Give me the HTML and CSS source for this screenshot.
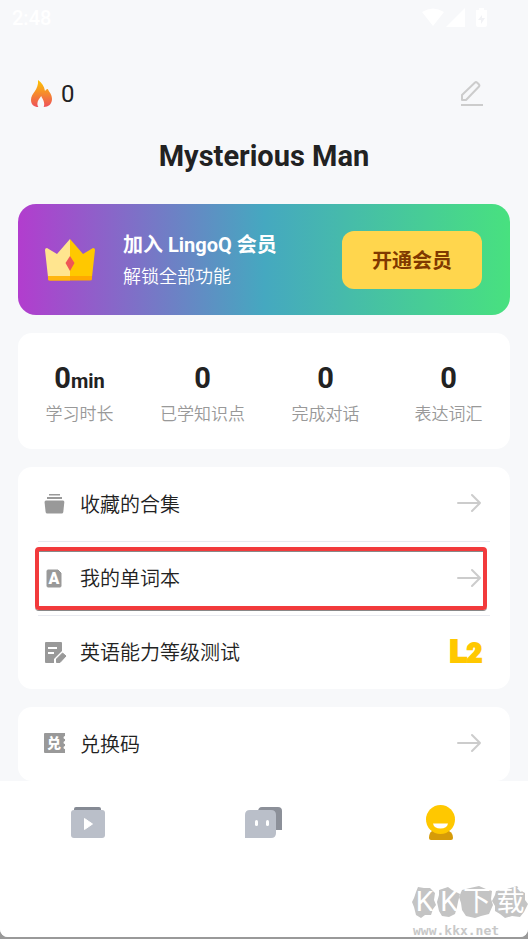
FILE: index.html
```html
<!DOCTYPE html>
<html lang="zh-CN">
<head>
<meta charset="utf-8">
<meta name="viewport" content="width=device-width, initial-scale=1">
<title>LingoQ</title>
<link rel="stylesheet" href="styles.css">
</head>
<body>
<div class="app">
  <div class="status">
    <span class="clock">2:48</span>
    <svg class="status-icons" width="66" height="20" viewBox="0 0 66 20" fill="#fff" aria-hidden="true">
      <path d="M0 4Q11-3 22 4L11 18z"/>
      <path d="M24 19 43 0v19z"/>
      <path d="M57 0h5v2h3v15q0 2-2 2h-7q-2 0-2-2V2h3z"/>
      <path d="m60 7-4 5h3v4l4-6h-3z" fill="#f1f2f5"/>
    </svg>
  </div>

  <header class="top">
    <div class="streak">
      <svg width="22" height="28" viewBox="0 0 22 28" aria-hidden="true">
        <defs><linearGradient id="fire" x1="0" y1="0" x2="0" y2="1"><stop offset="0" stop-color="#fdc500"/><stop offset="1" stop-color="#ee505a"/></linearGradient></defs>
        <path fill="url(#fire)" d="M7 0c4 3 6 6 7 11 1-1.500 2-2.200 2.800-2C18 12 21 14 21 19c0 5-3.500 8-8.300 8 .6-1.500.7-3 .2-5-.6-2.500-2-4-2.700-6-1.500 2.500-3.800 4.500-3.800 7.500 0 1.500.3 2.500 1 3.500C3 27 0 24.500 0 20 0 13 8 10 7 0z"/>
      </svg>
      <span>0</span>
    </div>
    <button class="edit" type="button" aria-label="编辑">
      <svg width="24" height="26" viewBox="0 0 24 26" fill="none" stroke="#ccc" stroke-width="2" aria-hidden="true">
        <path d="M2 19v-5L15 1.500q1-.8 2 0l2 2q.8 1 0 2L6 19z" stroke-linejoin="round"/><path d="M1 24h22"/>
      </svg>
    </button>
  </header>
  <h1 class="name">Mysterious Man</h1>

  <main class="cards">
    <section class="vip">
      <svg class="crown" width="50" height="42" viewBox="0 0 50 42" aria-hidden="true">
        <path d="M25 0 12 15 2 9Q0 9 0 11l3 27h22z" fill="#ffe58f"/>
        <path d="m25 0 13 15 10-6q2 0 2 2l-3 27H25z" fill="#ffc800"/>
        <path d="M3 37h44v3q0 1.500-2 1.500H5Q3 41.500 3 40z" fill="#ffa800"/>
        <path d="M3 37h22v4.500H5Q3 41.500 3 40z" fill="#ffb60f"/>
        <path d="m25 17 4.500 7-4.500 8-4.500-8z" fill="#ef5656"/>
      </svg>
      <div class="vip-text">
        <h2>加入 LingoQ 会员</h2>
        <p>解锁全部功能</p>
      </div>
      <button class="vip-button" type="button">开通会员</button>
    </section>

    <section class="card stats">
      <div class="stat"><strong>0<small>min</small></strong><span>学习时长</span></div>
      <div class="stat"><strong>0</strong><span>已学知识点</span></div>
      <div class="stat"><strong>0</strong><span>完成对话</span></div>
      <div class="stat"><strong>0</strong><span>表达词汇</span></div>
    </section>

    <nav class="card menu">
      <a class="row" href="#collections">
        <svg class="row-icon" width="24" height="24" viewBox="0 0 24 24" fill="#999" aria-hidden="true">
          <path d="M6 3h11v1.500H6zM4 6h15v2H4z"/><path d="M3 9.500h17q1.500 0 1.300 2l-1 9.500q-.2 1.500-1.700 1.500H4.300q-1.500 0-1.700-1.500l-1-9.500Q1.400 9.500 3 9.500z"/>
        </svg>
        <span>收藏的合集</span>
        <svg class="arrow" width="25" height="20" viewBox="0 0 25 20" aria-hidden="true"><path d="M1 10h22M15 2l8 8-8 8"/></svg>
      </a>
      <a class="row marked" href="#words">
        <svg class="row-icon" width="24" height="24" viewBox="0 0 24 24" aria-hidden="true">
          <path d="M5 4h10l3 3v13q0 1-1 1H5q-1 0-1-1V5q0-1 1-1z" fill="#999" stroke="#999" stroke-linejoin="round"/>
          <text x="11" y="18" class="icon-letter latin">A</text>
        </svg>
        <span>我的单词本</span>
        <svg class="arrow" width="25" height="20" viewBox="0 0 25 20" aria-hidden="true"><path d="M1 10h22M15 2l8 8-8 8"/></svg>
      </a>
      <a class="row" href="#level">
        <svg class="row-icon" width="24" height="24" viewBox="0 0 24 24" aria-hidden="true">
          <path d="M3 2h15q1 0 1 1v8l-8 8v4H3q-1 0-1-1V3q0-1 1-1z" fill="#999"/>
          <path d="M5 8h9M5 13h6" stroke="#fff" stroke-width="2"/>
          <path d="M13.500 22.500v-3.500l6-6 3.500 3-6 6.500z" fill="#999" stroke="#999" stroke-linejoin="round"/>
        </svg>
        <span>英语能力等级测试</span>
        <b class="level">L<i>2</i></b>
      </a>
    </nav>

    <nav class="card menu">
      <a class="row" href="#redeem">
        <svg class="row-icon" width="24" height="24" viewBox="0 0 24 24" aria-hidden="true">
          <path d="M2 2h20v3a1.500 1.500 0 0 0 0 3v2a1.500 1.500 0 0 0 0 3v2a1.500 1.500 0 0 0 0 3v4H2q-1 0-1-1V3q0-1 1-1z" fill="#999"/>
          <text x="11" y="17" class="icon-letter">兑</text>
        </svg>
        <span>兑换码</span>
        <svg class="arrow" width="25" height="20" viewBox="0 0 25 20" aria-hidden="true"><path d="M1 10h22M15 2l8 8-8 8"/></svg>
      </a>
    </nav>
  </main>

  <footer class="tabs">
    <a href="#videos" aria-label="视频">
      <svg width="40" height="36" viewBox="0 0 40 36" aria-hidden="true">
        <path d="M6 5V4q0-2 2-2h23q2 0 2 2v1z" fill="#858a94"/>
        <rect x="3" y="5" width="34" height="28" rx="3" fill="#babfc9"/>
        <path d="M16.500 13.500v11l8-5.500z" fill="#fff" stroke="#fff" stroke-linejoin="round"/>
      </svg>
    </a>
    <a href="#chat" aria-label="对话">
      <svg width="40" height="36" viewBox="0 0 40 36" aria-hidden="true">
        <path d="M14 7q0-5 4-5h16q4 0 4 4v19H26z" fill="#8c9099"/>
        <path d="M1 33V10q0-5 5-5h21q5 0 5 5v18q0 5-5 5z" fill="#babfc9"/>
        <rect x="11" y="15" width="3" height="6" rx="1.500" fill="#fff"/><rect x="22" y="15" width="3" height="6" rx="1.500" fill="#fff"/>
      </svg>
    </a>
    <a href="#me" aria-label="我的">
      <svg width="40" height="36" viewBox="0 0 40 36" aria-hidden="true">
        <path d="M12 26h17q4 2 4 7 0 2-2 2H11q-2 0-2-2 0-5 3-7z" fill="#d69b08"/>
        <circle cx="20.500" cy="14.500" r="14.500" fill="#ffc800"/>
        <path d="M13 18.500h15q-1 5-7.500 5t-7.500-5z" fill="#fff"/>
      </svg>
    </a>
  </footer>

  <div class="watermark">
    <svg class="blobs" width="116" height="34" viewBox="0 0 116 34" fill="#c4c4c4" aria-hidden="true">
      <path d="m4 6 2-5 6 1 6 0 5 5-1 7 2 5-3 4-2 6-6 0-4 3-5-3-2-8-2-5 2-4z"/>
      <path d="m27 4 9-3 4 3 8 4-2 8-1 5-2 7-6 3-7-1-3-5-2-9 2-7z"/>
      <path d="m50 4 8-2 9-2 7 3 6 2-1 8 2 6-4 9-8 2-6 2-9-2-4-6-1-7-2-6z"/>
      <path d="m84 5 11-2 10-3 3 4 5 3 0 7 3 4-4 8-4 5-8-1-7 2-5-4-5-3 0-5-3-5 3-6z"/>
    </svg>
    <span class="wm-name"><span>K</span><span>K</span><span>下</span><span>载</span></span>
    <span class="wm-url">www.kkx.net</span>
  </div>
</div>
</body>
</html>
```
FILE: styles.css
```css
* {
  box-sizing: border-box;
}

body {
  margin: 0;
  background: #999;
  color: #222;
  font-family: Roboto, "Noto Sans CJK SC", sans-serif;
}

h1, h2, p {
  margin: 0;
}

a {
  color: inherit;
  text-decoration: none;
}

button {
  border: 0;
  padding: 0;
  background: none;
  font: inherit;
  cursor: pointer;
}

svg {
  display: block;
  flex: none;
}

.app {
  position: relative;
  display: flex;
  flex-direction: column;
  min-height: calc(100vh - 2px);
  background: #f7f8fa;
  border-radius: 0 0 8px 8px;
  overflow: hidden;
}

.status {
  display: flex;
  align-items: center;
  justify-content: space-between;
  height: 36px;
  padding: 0 40px 0 12px;
  color: #fff;
}

.clock {
  font-size: 20px;
  font-weight: 500;
}

.top {
  display: flex;
  align-items: center;
  justify-content: space-between;
  margin-top: 40px;
  padding: 0 44px 0 31px;
  height: 36px;
}

.streak {
  display: flex;
  align-items: center;
  gap: 8px;
  font-size: 24px;
}

.name {
  margin-top: 26px;
  font-size: 29px;
  line-height: 36px;
  text-align: center;
}

.cards {
  display: flex;
  flex-direction: column;
  gap: 18px;
  padding: 30px 18px 0;
}

.vip {
  display: flex;
  align-items: center;
  height: 111px;
  padding: 0 28px 0 27px;
  border-radius: 18px;
  background: linear-gradient(90deg, #b23dce, #45a8c0 50%, #48e17f);
  color: #fff;
}

.vip-text {
  flex: 1;
  margin-left: 28px;
  padding-top: 2px;
}

.vip-text h2 {
  font-size: 20px;
  line-height: 32px;
}

.vip-text p {
  font-size: 18px;
  font-weight: 350;
  line-height: 32px;
}

.vip-button {
  width: 140px;
  height: 58px;
  border-radius: 12px;
  background: #ffd64d;
  color: #803900;
  font-size: 20px;
  font-weight: 700;
}

.card {
  border-radius: 14px;
  background: #fff;
}

.stats {
  display: grid;
  grid-template-columns: repeat(4, 1fr);
  height: 116px;
  padding-top: 26px;
}

.stat {
  text-align: center;
}

.stat strong {
  display: block;
  font-size: 29px;
  line-height: 38px;
}

.stat small {
  font-size: 20px;
  line-height: 20px;
}

.stat span {
  display: block;
  color: #999;
  font-size: 17px;
  font-weight: 350;
  line-height: 34px;
}

.row {
  position: relative;
  display: flex;
  align-items: center;
  height: 74px;
  margin: 0 20px;
  padding: 0 8px 2px 5px;
  font-size: 20px;
  font-weight: 350;
}

.row + .row {
  border-top: 1px solid #e8eaf0;
}

.row > span {
  flex: 1;
  margin-left: 13px;
}

.arrow {
  fill: none;
  stroke: #ccc;
  stroke-width: 2;
  stroke-linecap: round;
  stroke-linejoin: round;
}

.marked::after {
  content: "";
  position: absolute;
  inset: 5px 3px 5px -3px;
  border: 4px solid #f23a3c;
  border-radius: 4px;
  box-shadow: 0 1px 0 #888, inset 0 1px 0 #888;
}

.icon-letter {
  fill: #fff;
  font-size: 14px;
  font-weight: 900;
  text-anchor: middle;
}

.icon-letter.latin {
  font-size: 16px;
}

.level {
  color: #ffc800;
  font-family: Roboto, sans-serif;
  font-size: 32px;
  font-weight: 900;
  line-height: 32px;
  -webkit-text-stroke: 2px #ffc800;
}

.level i {
  font-size: 26px;
  font-style: normal;
}

.tabs {
  flex: 1;
  display: grid;
  grid-template-columns: repeat(3, 1fr);
  justify-items: center;
  padding-top: 24px;
  background: #fff;
}

.watermark {
  position: absolute;
  right: 0;
  bottom: 0;
  width: 116px;
  height: 51px;
}

.blobs {
  position: absolute;
}

.wm-name {
  position: absolute;
  inset: 0 0 auto;
  display: grid;
  grid-template-columns: 25px 24px 32px 35px;
  justify-items: center;
  color: #fff;
  font-size: 28px;
  line-height: 32px;
}

.wm-url {
  position: absolute;
  left: 1px;
  bottom: -2px;
  color: #c8c8c8;
  font: 700 13px/16px "DejaVu Sans Mono", monospace;
}
```
